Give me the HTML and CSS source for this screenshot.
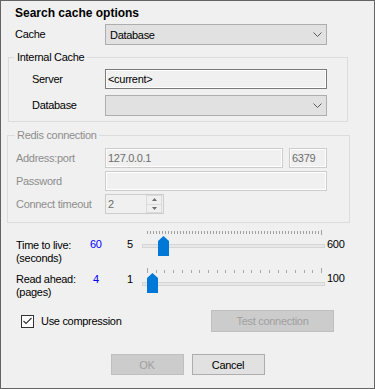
FILE: index.html
```html
<!DOCTYPE html>
<html lang="en">

<head>
    <meta charset="UTF-8" />
    <title>Search cache options</title>
    <link rel="stylesheet" href="styles.css">
</head>
<body>
    <div class="dialog">
        <div class="content">
            <h1 class="title">Search cache options</h1>

            <div class="row row-cache">
                <span class="label">Cache</span>
                <div class="combo">
                    <span>Database</span>
                    <svg class="chevron" width="9" height="5" viewBox="0 0 9 5">
                        <polyline points="0.5,0.5 4.5,4.5 8.5,0.5" fill="none" stroke="#5a5a5a" stroke-width="1"></polyline>
                    </svg>
                </div>
            </div>

            <fieldset class="group group-internal">
                <legend>Internal Cache</legend>
                <div class="group-body">
                    <div class="row">
                        <span class="label">Server</span>
                        <div class="textbox">&lt;current&gt;</div>
                    </div>
                    <div class="row">
                        <span class="label">Database</span>
                        <div class="combo">
                            <span></span>
                            <svg class="chevron" width="9" height="5" viewBox="0 0 9 5">
                                <polyline points="0.5,0.5 4.5,4.5 8.5,0.5" fill="none" stroke="#5a5a5a" stroke-width="1"></polyline>
                            </svg>
                        </div>
                    </div>
                </div>
            </fieldset>

            <fieldset class="group group-redis" disabled>
                <legend>Redis connection</legend>
                <div class="group-body">
                    <div class="row">
                        <span class="label">Address:port</span>
                        <div class="textbox textbox-address">127.0.0.1</div>
                        <div class="textbox textbox-port">6379</div>
                    </div>
                    <div class="row">
                        <span class="label">Password</span>
                        <div class="textbox"></div>
                    </div>
                    <div class="row">
                        <span class="label">Connect timeout</span>
                        <div class="numeric">
                            <span>2</span>
                            <div class="spin">
                                <div class="spin-half">
                                    <svg width="5" height="3" viewBox="0 0 5 3"><polygon points="2.5,0 5,3 0,3" fill="#6d6d6d"></polygon></svg>
                                </div>
                                <div class="spin-half">
                                    <svg width="5" height="3" viewBox="0 0 5 3"><polygon points="0,0 5,0 2.5,3" fill="#6d6d6d"></polygon></svg>
                                </div>
                            </div>
                        </div>
                    </div>
                </div>
            </fieldset>

            <div class="track-row track-ttl">
                <span class="track-label">Time to live:<br>(seconds)</span>
                <span class="track-value">60</span>
                <span class="track-min">5</span>
                <svg class="slider" width="183" height="26" viewBox="0 0 183 26">
                    <line x1="5" y1="2.5" x2="180" y2="2.5" stroke="#a0a0a0" stroke-width="3" stroke-dasharray="1 2"></line>
                    <line x1="179.5" y1="0" x2="179.5" y2="5" stroke="#a0a0a0"></line>
                    <rect x="0.5" y="14.5" width="182" height="3" fill="#e7e7e7" stroke="#d6d6d6"></rect>
                    <polygon points="16,11 21.5,6 27,11 27,26 16,26" fill="#0078d7"></polygon>
                </svg>
                <span class="track-max">600</span>
            </div>

            <div class="track-row track-read">
                <span class="track-label">Read ahead:<br>(pages)</span>
                <span class="track-value">4</span>
                <span class="track-min">1</span>
                <svg class="slider" width="183" height="26" viewBox="0 0 183 26">
                    <g stroke="#a8a8a8">
                        <line x1="5.5" y1="1" x2="5.5" y2="6"></line>
                        <line x1="14.5" y1="3" x2="14.5" y2="6"></line>
                        <line x1="22.5" y1="3" x2="22.5" y2="6"></line>
                        <line x1="31.5" y1="3" x2="31.5" y2="6"></line>
                        <line x1="40.5" y1="3" x2="40.5" y2="6"></line>
                        <line x1="49.5" y1="3" x2="49.5" y2="6"></line>
                        <line x1="57.5" y1="3" x2="57.5" y2="6"></line>
                        <line x1="66.5" y1="3" x2="66.5" y2="6"></line>
                        <line x1="75.5" y1="3" x2="75.5" y2="6"></line>
                        <line x1="83.5" y1="3" x2="83.5" y2="6"></line>
                        <line x1="92.5" y1="3" x2="92.5" y2="6"></line>
                        <line x1="101.5" y1="3" x2="101.5" y2="6"></line>
                        <line x1="109.5" y1="3" x2="109.5" y2="6"></line>
                        <line x1="118.5" y1="3" x2="118.5" y2="6"></line>
                        <line x1="127.5" y1="3" x2="127.5" y2="6"></line>
                        <line x1="136.5" y1="3" x2="136.5" y2="6"></line>
                        <line x1="144.5" y1="3" x2="144.5" y2="6"></line>
                        <line x1="153.5" y1="3" x2="153.5" y2="6"></line>
                        <line x1="162.5" y1="3" x2="162.5" y2="6"></line>
                        <line x1="170.5" y1="3" x2="170.5" y2="6"></line>
                        <line x1="179.5" y1="1" x2="179.5" y2="6"></line>
                    </g>
                    <rect x="0.5" y="15.5" width="182" height="3" fill="#e7e7e7" stroke="#d6d6d6"></rect>
                    <polygon points="5,11 10.5,6 16,11 16,26 5,26" fill="#0078d7"></polygon>
                </svg>
                <span class="track-max">100</span>
            </div>

            <div class="check-row">
                <span class="checkbox">
                    <svg width="11" height="11" viewBox="0 0 11 11">
                        <polyline points="1.5,5 4,7.5 9.5,2" fill="none" stroke="#333" stroke-width="1.1"></polyline>
                    </svg>
                </span>
                <span class="check-label">Use compression</span>
                <button class="button button-test" disabled>Test connection</button>
            </div>
        </div>

        <div class="footer">
            <button class="button button-ok" disabled>OK</button>
            <button class="button button-cancel">Cancel</button>
        </div>
    </div>
</body>
</html>
```

FILE: styles.css
```css
body {
    margin: 0;
    padding: 0;
    font-family: 'Liberation Sans', Arial, sans-serif;
    font-size: 11px;
    letter-spacing: -0.3px;
    color: #000;
    background: #f0f0f0;
}

.dialog {
    width: 375px;
    height: 389px;
    box-sizing: border-box;
    border: 1px solid #646464;
    background: #f0f0f0;
    overflow: hidden;
}

.content {
    padding-left: 14px;
}

.title {
    margin: 4px 0 0;
    font-size: 12px;
    font-weight: bold;
    line-height: 16px;
    letter-spacing: 0;
}

.row {
    display: flex;
    align-items: center;
}

.row-cache {
    margin-top: 3px;
}

.label {
    flex-shrink: 0;
    line-height: 13px;
}

.row-cache .label {
    width: 90px;
}

.combo {
    box-sizing: border-box;
    width: 222px;
    height: 21px;
    display: flex;
    align-items: center;
    justify-content: space-between;
    padding: 0 4px;
    border: 1px solid #adadad;
    background: #e1e1e1;
}

.chevron {
    display: block;
}

.textbox {
    box-sizing: border-box;
    width: 222px;
    height: 20px;
    display: flex;
    align-items: center;
    padding-left: 2px;
    border: 1px solid #7a7a7a;
    box-shadow: inset 0 0 0 1px #fff;
}

/* group boxes */
.group {
    margin: 5px 0 0 -7px;
    padding: 0;
    min-width: 0;
    box-sizing: border-box;
    width: 340px;
    border: 1px solid #dcdcdc;
}

.group legend {
    margin-left: 5px;
    padding: 0 3px;
    line-height: 14px;
}

.group-internal .group-body {
    padding: 5px 0 5px 23px;
}

.group-internal .label {
    width: 73px;
}

.group-internal .row + .row {
    margin-top: 6px;
}

.group-redis {
    margin: 6px 0 0 -8px;
    width: 343px;
    color: #8d8d8d;
}

.group-redis legend {
    margin-left: 7px;
    padding: 0 2px;
}

.group-redis .group-body {
    padding: 6px 0 8px 8px;
}

.group-redis .label {
    width: 89px;
}

.group-redis .row + .row {
    margin-top: 3px;
}

.group-redis .textbox {
    border-color: #cccccc;
    color: #6d6d6d;
}

.textbox-address {
    width: 178px;
}

.group-redis .textbox-port {
    width: 38px;
    margin-left: 6px;
}

.numeric {
    box-sizing: border-box;
    width: 59px;
    height: 20px;
    display: flex;
    align-items: center;
    justify-content: space-between;
    padding: 0 1px 0 2px;
    border: 1px solid #cccccc;
    color: #6d6d6d;
}

.spin {
    width: 14px;
    height: 16px;
    display: flex;
    flex-direction: column;
    border: 1px solid #dadada;
    background: #f0f0f0;
}

.spin-half {
    flex: 1;
    display: flex;
    align-items: center;
    justify-content: center;
}

.spin-half + .spin-half {
    border-top: 1px solid #dadada;
}

.spin svg {
    display: block;
}

/* track bars */
.track-row {
    display: grid;
    grid-template-columns: 74px 37px 15px 183px auto;
    align-items: start;
    margin-left: 1px;
    line-height: 13px;
}

.track-ttl {
    margin-top: 7px;
}

.track-read {
    margin-top: 2px;
}

.track-ttl .track-label {
    margin-top: 9px;
}

.track-ttl .track-value,
.track-ttl .track-min,
.track-ttl .track-max {
    margin-top: 8px;
}

.track-read .track-label,
.track-read .track-value,
.track-read .track-min {
    margin-top: 6px;
}

.track-read .track-max {
    margin-top: 5px;
}

.track-value {
    color: #0000ff;
}

.track-read .track-value {
    padding-left: 3px;
}

.slider {
    display: block;
}

.track-max {
    margin-left: 2px;
}

/* bottom */
.check-row {
    display: flex;
    align-items: center;
    margin: 11px 40px 0 6px;
}

.checkbox {
    box-sizing: border-box;
    width: 13px;
    height: 13px;
    border: 1px solid #333;
    background: #fff;
}

.checkbox svg {
    display: block;
}

.check-label {
    margin-left: 7px;
}

.button {
    box-sizing: border-box;
    height: 21px;
    padding: 0;
    font-family: inherit;
    font-size: 11px;
    letter-spacing: inherit;
    border: 1px solid #adadad;
    background: #e1e1e1;
    color: #000;
}

.button:disabled {
    border-color: #bfbfbf;
    background: #cccccc;
    color: #a0a0a0;
}

.button-test {
    margin-left: auto;
    width: 123px;
    height: 22px;
}

.footer {
    display: flex;
    justify-content: center;
    gap: 8px;
    margin-top: 22px;
}

.button-ok,
.button-cancel {
    width: 73px;
}
```
